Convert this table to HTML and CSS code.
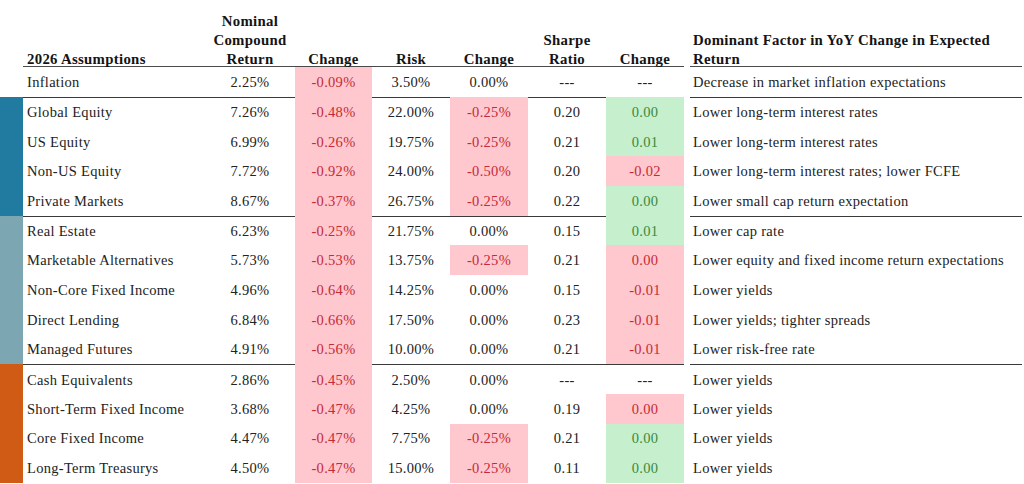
FILE: index.html
```html
<!DOCTYPE html>
<html lang="en">
<head>
<meta charset="utf-8">
<title>2026 Assumptions</title>
<link rel="stylesheet" href="styles.css">
</head>
<body>
<table class="assump">
  <colgroup>
    <col class="c-bar"><col class="c-name"><col class="c-num"><col class="c-chg1">
    <col class="c-num2"><col class="c-num2"><col class="c-num2"><col class="c-num2">
    <col class="c-gap"><col class="c-factor">
  </colgroup>
  <thead>
    <tr class="head">
      <th class="bar"></th>
      <th class="name"><span class="hd">2026 Assumptions</span></th>
      <th><span class="hd">Nominal<br>Compound<br>Return</span></th>
      <th><span class="hd">Change</span></th>
      <th><span class="hd">Risk</span></th>
      <th><span class="hd">Change</span></th>
      <th><span class="hd">Sharpe<br>Ratio</span></th>
      <th><span class="hd">Change</span></th>
      <th class="gap"></th>
      <th class="factor"><span class="hd">Dominant Factor in YoY Change in Expected<br>Return</span></th>
    </tr>
  </thead>
  <tbody>
    <tr class="first">
      <td class="bar"></td>
      <td class="name">Inflation</td><td>2.25%</td><td class="neg">-0.09%</td><td>3.50%</td><td>0.00%</td><td>---</td><td>---</td><td class="gap"></td>
      <td class="factor">Decrease in market inflation expectations</td>
    </tr>
    <tr class="sep">
      <td class="bar blue" rowspan="4"></td>
      <td class="name">Global Equity</td><td>7.26%</td><td class="neg">-0.48%</td><td>22.00%</td><td class="neg">-0.25%</td><td>0.20</td><td class="pos">0.00</td><td class="gap"></td>
      <td class="factor">Lower long-term interest rates</td>
    </tr>
    <tr>
      <td class="name">US Equity</td><td>6.99%</td><td class="neg">-0.26%</td><td>19.75%</td><td class="neg">-0.25%</td><td>0.21</td><td class="pos">0.01</td><td class="gap"></td>
      <td class="factor">Lower long-term interest rates</td>
    </tr>
    <tr>
      <td class="name">Non-US Equity</td><td>7.72%</td><td class="neg">-0.92%</td><td>24.00%</td><td class="neg">-0.50%</td><td>0.20</td><td class="neg">-0.02</td><td class="gap"></td>
      <td class="factor">Lower long-term interest rates; lower FCFE</td>
    </tr>
    <tr>
      <td class="name">Private Markets</td><td>8.67%</td><td class="neg">-0.37%</td><td>26.75%</td><td class="neg">-0.25%</td><td>0.22</td><td class="pos">0.00</td><td class="gap"></td>
      <td class="factor">Lower small cap return expectation</td>
    </tr>
    <tr class="sep">
      <td class="bar slate" rowspan="5"></td>
      <td class="name">Real Estate</td><td>6.23%</td><td class="neg">-0.25%</td><td>21.75%</td><td>0.00%</td><td>0.15</td><td class="pos">0.01</td><td class="gap"></td>
      <td class="factor">Lower cap rate</td>
    </tr>
    <tr>
      <td class="name">Marketable Alternatives</td><td>5.73%</td><td class="neg">-0.53%</td><td>13.75%</td><td class="neg">-0.25%</td><td>0.21</td><td class="neg">0.00</td><td class="gap"></td>
      <td class="factor">Lower equity and fixed income return expectations</td>
    </tr>
    <tr>
      <td class="name">Non-Core Fixed Income</td><td>4.96%</td><td class="neg">-0.64%</td><td>14.25%</td><td>0.00%</td><td>0.15</td><td class="neg">-0.01</td><td class="gap"></td>
      <td class="factor">Lower yields</td>
    </tr>
    <tr>
      <td class="name">Direct Lending</td><td>6.84%</td><td class="neg">-0.66%</td><td>17.50%</td><td>0.00%</td><td>0.23</td><td class="neg">-0.01</td><td class="gap"></td>
      <td class="factor">Lower yields; tighter spreads</td>
    </tr>
    <tr>
      <td class="name">Managed Futures</td><td>4.91%</td><td class="neg">-0.56%</td><td>10.00%</td><td>0.00%</td><td>0.21</td><td class="neg">-0.01</td><td class="gap"></td>
      <td class="factor">Lower risk-free rate</td>
    </tr>
    <tr class="sep">
      <td class="bar orange" rowspan="4"></td>
      <td class="name">Cash Equivalents</td><td>2.86%</td><td class="neg">-0.45%</td><td>2.50%</td><td>0.00%</td><td>---</td><td>---</td><td class="gap"></td>
      <td class="factor">Lower yields</td>
    </tr>
    <tr>
      <td class="name">Short-Term Fixed Income</td><td>3.68%</td><td class="neg">-0.47%</td><td>4.25%</td><td>0.00%</td><td>0.19</td><td class="neg">0.00</td><td class="gap"></td>
      <td class="factor">Lower yields</td>
    </tr>
    <tr>
      <td class="name">Core Fixed Income</td><td>4.47%</td><td class="neg">-0.47%</td><td>7.75%</td><td class="neg">-0.25%</td><td>0.21</td><td class="pos">0.00</td><td class="gap"></td>
      <td class="factor">Lower yields</td>
    </tr>
    <tr>
      <td class="name">Long-Term Treasurys</td><td>4.50%</td><td class="neg">-0.47%</td><td>15.00%</td><td class="neg">-0.25%</td><td>0.11</td><td class="pos">0.00</td><td class="gap"></td>
      <td class="factor">Lower yields</td>
    </tr>
  </tbody>
</table>
</body>
</html>
```

FILE: styles.css
```css
html, body {
  margin: 0;
  padding: 0;
  background: #ffffff;
  overflow: hidden;
}

.assump {
  table-layout: fixed;
  width: 1022px;
  border-collapse: separate;
  border-spacing: 0;
  font-family: "Liberation Serif", "Times New Roman", serif;
  font-size: 14.5px;
  letter-spacing: 0.3px;
  color: #222222;
}

.c-bar { width: 23px; }
.c-name { width: 182px; }
.c-num { width: 90px; }
.c-chg1 { width: 77px; }
.c-num2 { width: 78px; }
.c-gap { width: 6px; }
.c-factor { width: 332px; }

.assump th,
.assump td {
  padding: 0;
  text-align: center;
  white-space: nowrap;
}

.assump th {
  font-weight: bold;
  font-size: 14.8px;
  color: #141414;
  line-height: 19px;
  vertical-align: bottom;
  border-bottom: 1px solid #4a4a4a;
}

.hd {
  display: block;
  margin-bottom: -3px;
}

.head { height: 67px; }

.assump td {
  vertical-align: middle;
  line-height: 18px;
}

.assump tbody tr { height: 29.7px; }
.assump tbody tr.first { height: 30px; }

.assump tr.sep td {
  border-top: 1px solid #3a3a3a;
}

.assump .name,
.assump .factor {
  text-align: left;
}

.assump .name { padding-left: 4px; }
.assump .factor { padding-left: 3px; }

.assump .bar,
.assump .gap,
.assump tr.sep td.bar,
.assump tr.sep td.gap {
  border: none;
}

.assump .neg,
.assump tr.sep td.neg {
  background: #ffc7ce;
  color: #c42b37;
  border-color: transparent;
}

.assump .pos,
.assump tr.sep td.pos {
  background: #c6efce;
  color: #3a8a3c;
  border-color: transparent;
}

.blue { background: #217ba0; }
.slate { background: #7ba6b2; }
.orange { background: #d05b14; }
```
